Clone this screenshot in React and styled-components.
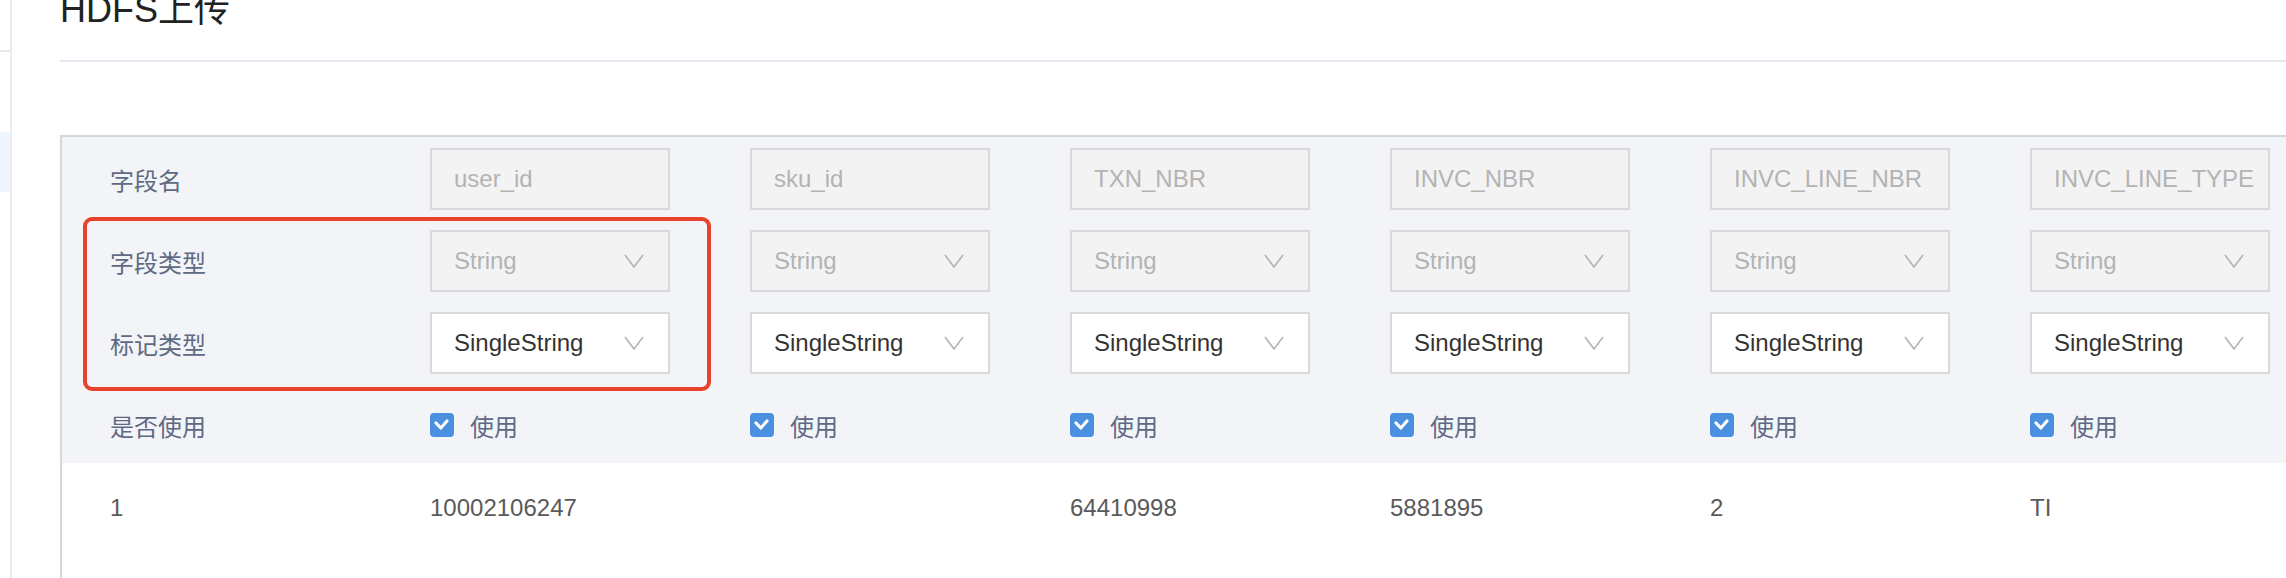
import React from "react";
import styled, { createGlobalStyle } from "styled-components";

const GlobalStyle = createGlobalStyle`
  html, body {
    margin: 0;
    padding: 0;
    background: #fff;
  }
`

const Page = styled.div`
  display: flex;
  width: 2286px;
  height: 578px;
  overflow: hidden;
  background: #fff;
  font-family: "Liberation Sans", "Noto Sans CJK SC", sans-serif;
`

const Sidebar = styled.div`
  box-sizing: border-box;
  width: 12px;
  flex-shrink: 0;
  border-right: 2px solid #ececec;
  display: flex;
  flex-direction: column;
`
const SideRule = styled.div`
  margin-top: 50px;
  height: 2px;
  background: #e8e8e8;
`
const SideActive = styled.div`
  margin-top: 80px;
  height: 60px;
  background: #f0f6fe;
`

const Main = styled.div`
  flex: 1;
  min-width: 0;
  padding-left: 48px;
  overflow: hidden;
  display: flex;
  flex-direction: column;
`
const Title = styled.h2`
  margin: -8px 0 0;
  font-size: 36px;
  line-height: 36px;
  font-weight: normal;
  color: #222;
  white-space: nowrap;
`
const TitleRule = styled.div`
  margin-top: 32px;
  height: 2px;
  flex-shrink: 0;
  background: #e4e8ee;
`

const Table = styled.div`
  position: relative;
  flex: 1;
  margin-top: 73px;
  border-top: 2px solid #d3d6dd;
  border-left: 2px solid #d3d6dd;
`
const Head = styled.div`
  background: #f3f4f8;
  padding: 11px 0 7px;
  display: flex;
  flex-direction: column;
  gap: 20px;
`
const Row = styled.div`
  display: grid;
  grid-template-columns: 240px repeat(6, 240px);
  column-gap: 80px;
  align-items: center;
  padding-left: 48px;
  height: ${p => p.h}px;
  background: ${p => p.bg || "transparent"};
  font-size: 24px;
  white-space: nowrap;
`
const Label = styled.div`
  color: #5f6a82;
`
const Field = styled.div`
  box-sizing: border-box;
  height: 62px;
  border: 2px solid #dadada;
  background: ${p => (p.disabled ? "#f3f3f3" : "#fff")};
  color: ${p => (p.disabled ? "#b3b3b3" : "#333")};
  display: flex;
  align-items: center;
  justify-content: space-between;
  padding: 0 24px 0 22px;
`
const Check = styled.label`
  display: flex;
  align-items: center;
  gap: 16px;
  color: #5f6a82;
`
const Box = styled.span`
  flex-shrink: 0;
  width: 24px;
  height: 24px;
  border-radius: 4px;
  background: #4a8fe0;
  display: flex;
  align-items: center;
  justify-content: center;
`
const Cell = styled.div`
  color: #5a5a5a;
`
const Mark = styled.div`
  position: absolute;
  left: 21px;
  top: 80px;
  width: 628px;
  height: 174px;
  box-sizing: border-box;
  border: 4px solid #e8412c;
  border-radius: 9px;
  pointer-events: none;
`

const Chevron = () => (
  <svg width="20" height="14" viewBox="0 0 20 14">
    <polyline points="1,1 10,13 19,1" fill="none" stroke="#b3b3b3" strokeWidth="1.6" />
  </svg>
)

const Tick = () => (
  <svg width="24" height="24" viewBox="0 0 24 24">
    <polyline points="6,10 10.8,15 17,8" fill="none" stroke="#fff" strokeWidth="3.2" strokeLinecap="round" strokeLinejoin="round" />
  </svg>
)

const fields = ["user_id", "sku_id", "TXN_NBR", "INVC_NBR", "INVC_LINE_NBR", "INVC_LINE_TYPE"];
const sample = ["10002106247", "", "64410998", "5881895", "2", "TI"];

const App = () => (
  <Page>
    <GlobalStyle />
    <Sidebar>
      <SideRule />
      <SideActive />
    </Sidebar>
    <Main>
      <Title>HDFS上传</Title>
      <TitleRule />
      <Table>
        <Head>
          <Row h={62}>
            <Label>字段名</Label>
            {fields.map(f => (
              <Field key={f} disabled>{f}</Field>
            ))}
          </Row>
          <Row h={62}>
            <Label>字段类型</Label>
            {fields.map(f => (
              <Field key={f} disabled>String<Chevron /></Field>
            ))}
          </Row>
          <Row h={62}>
            <Label>标记类型</Label>
            {fields.map(f => (
              <Field key={f}>SingleString<Chevron /></Field>
            ))}
          </Row>
          <Row h={62}>
            <Label>是否使用</Label>
            {fields.map(f => (
              <Check key={f}><Box><Tick /></Box>使用</Check>
            ))}
          </Row>
        </Head>
        <Row h={90} bg="#fff">
          <Cell>1</Cell>
          {sample.map((v, i) => (
            <Cell key={i}>{v}</Cell>
          ))}
        </Row>
        <Mark />
      </Table>
    </Main>
  </Page>
)

export default App;
